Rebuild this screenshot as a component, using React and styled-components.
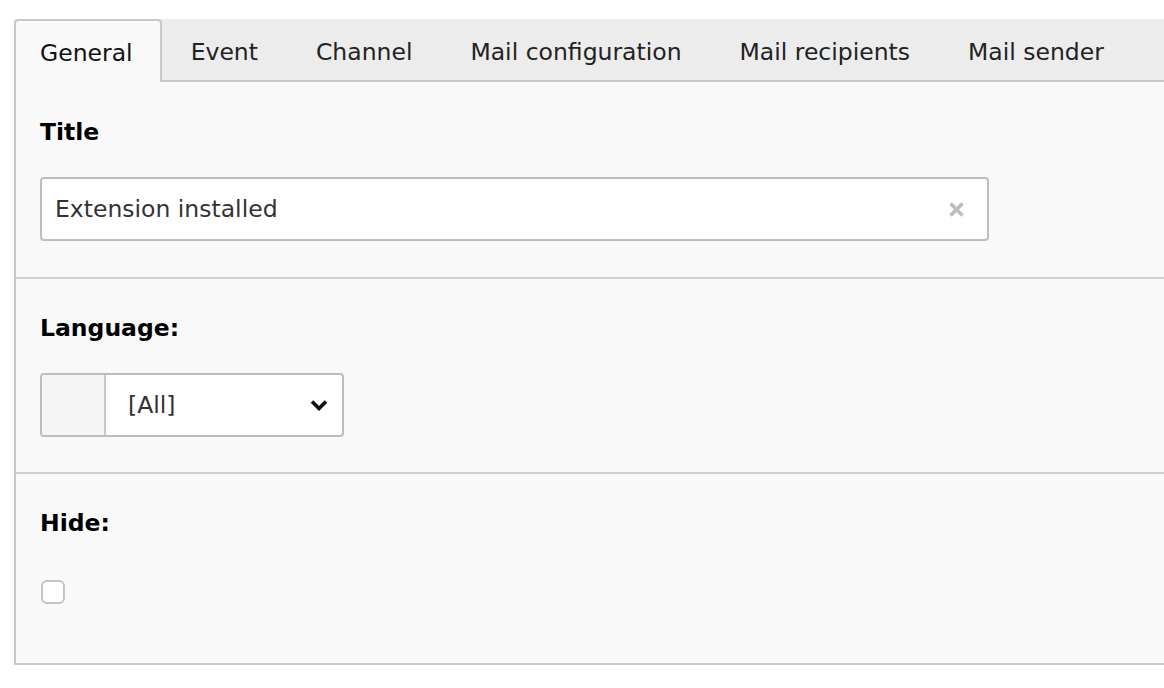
import React from "react";
import styled, { createGlobalStyle } from "styled-components";

const GlobalStyle = createGlobalStyle`
  html, body {
    margin: 0;
    padding: 0;
    background: #ffffff;
    overflow: hidden;
  }
  body {
    font-family: "DejaVu Sans", Verdana, sans-serif;
    font-size: 23.5px;
    color: #333;
  }
`;

const Page = styled.div`
  padding: 19px 0 0 14px;
  width: 1220px;
`;

const TabBar = styled.div`
  display: flex;
  height: 61px;
  background: #ececec;
  border-bottom: 2px solid #c8c8c8;
  box-sizing: content-box;
`;

const Tab = styled.div`
  display: flex;
  align-items: center;
  padding: 3px 27px 0 ${(p) => (p.$first ? "24px" : "27px")};
  margin-bottom: ${(p) => (p.$active ? "-2px" : "0")};
  color: ${(p) => (p.$active ? "#111" : "#222")};
  background: ${(p) => (p.$active ? "#f9f9f9" : "transparent")};
  border: 2px solid ${(p) => (p.$active ? "#c8c8c8" : "transparent")};
  border-bottom: none;
  border-radius: 4px 4px 0 0;
  white-space: nowrap;
`;

const Panel = styled.div`
  background: #f9f9f9;
  border-left: 2px solid #c8c8c8;
  border-bottom: 2px solid #c8c8c8;
`;

const Section = styled.div`
  padding: ${(p) => (p.$divided ? "33px 24px 35px" : "34px 24px 36px")};
  padding-bottom: ${(p) => p.$bottom};
  border-top: ${(p) => (p.$divided ? "2px solid #d0d0d0" : "none")};
`;

const Label = styled.div`
  font-weight: bold;
  color: #000;
  line-height: 33px;
  margin-bottom: 28px;
`;

const TextBox = styled.div`
  display: flex;
  align-items: center;
  width: 949px;
  height: 64px;
  box-sizing: border-box;
  background: #fff;
  border: 2px solid #bdbdbd;
  border-radius: 4px;
  padding: 0 22px 0 13px;
`;

const Value = styled.span`
  flex: 1;
  color: #333;
`;

const SelectGroup = styled.div`
  display: flex;
  width: 304px;
  height: 64px;
  box-sizing: border-box;
  border: 2px solid #bdbdbd;
  border-radius: 4px;
  overflow: hidden;
  background: #fff;
`;

const Addon = styled.div`
  width: 62px;
  background: #f5f5f5;
  border-right: 2px solid #c8c8c8;
`;

const SelectValue = styled.div`
  flex: 1;
  display: flex;
  align-items: center;
  padding: 0 14px 0 22px;
  color: #333;
`;

const CheckRow = styled.div`
  padding: 12px 0 0 1px;
`;

const Checkbox = styled.div`
  width: 24px;
  height: 24px;
  box-sizing: border-box;
  border: 2px solid #c4c4c4;
  border-radius: 6px;
  background: #fff;
`;

const tabs = [
  "General",
  "Event",
  "Channel",
  "Mail configuration",
  "Mail recipients",
  "Mail sender",
];

function ClearIcon() {
  return (
    <svg width="17" height="17" viewBox="0 0 17 17">
      <path
        d="M2.5 2.5 L14.5 14.5 M14.5 2.5 L2.5 14.5"
        stroke="#bdbdbd"
        strokeWidth="3.6"
      />
    </svg>
  );
}

function Chevron() {
  return (
    <svg width="18" height="12" viewBox="0 0 18 12">
      <polyline
        points="2,2.5 9,9.5 16,2.5"
        fill="none"
        stroke="#111"
        strokeWidth="3.6"
      />
    </svg>
  );
}

export default function App() {
  return (
    <>
      <GlobalStyle />
      <Page>
        <TabBar>
          {tabs.map((t, i) => (
            <Tab key={t} $active={i === 0} $first={i === 0}>
              {t}
            </Tab>
          ))}
        </TabBar>
        <Panel>
          <Section>
            <Label>Title</Label>
            <TextBox>
              <Value>Extension installed</Value>
              <ClearIcon />
            </TextBox>
          </Section>
          <Section $divided>
            <Label>Language:</Label>
            <SelectGroup>
              <Addon />
              <SelectValue>
                <Value>[All]</Value>
                <Chevron />
              </SelectValue>
            </SelectGroup>
          </Section>
          <Section $divided $bottom="59px">
            <Label>Hide:</Label>
            <CheckRow>
              <Checkbox />
            </CheckRow>
          </Section>
        </Panel>
      </Page>
    </>
  );
}
